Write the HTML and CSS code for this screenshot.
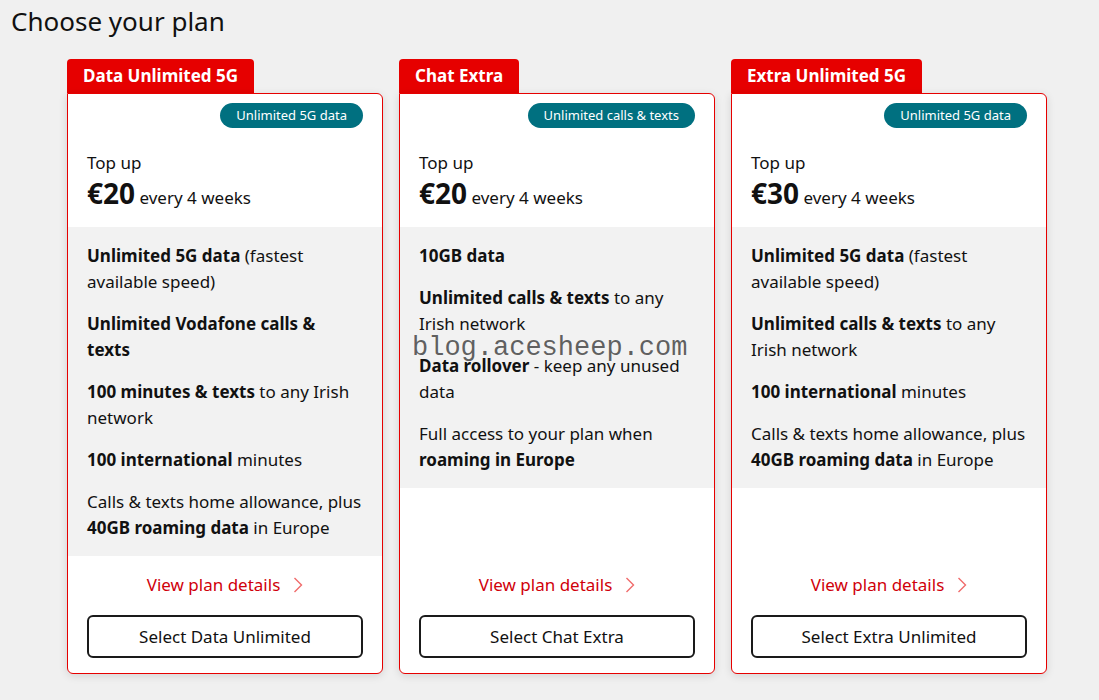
FILE: index.html
```html
<!DOCTYPE html>
<html lang="en">
<head>
<meta charset="utf-8">
<title>Choose your plan</title>
<link rel="stylesheet" href="styles.css">
</head>
<body>
<h1 class="page-title">Choose your plan</h1>
<div class="plans">
  <div class="plan">
    <div class="plan-tab">Data Unlimited 5G</div>
    <div class="plan-card">
      <div class="plan-head">
        <span class="badge">Unlimited 5G data</span>
        <div class="topup">Top up</div>
        <div class="price"><strong>€20</strong> every 4 weeks</div>
      </div>
      <div class="plan-features">
        <p><b>Unlimited 5G data</b> (fastest available speed)</p>
        <p><b>Unlimited Vodafone calls &amp;<br>texts</b></p>
        <p><b>100 minutes &amp; texts</b> to any Irish network</p>
        <p><b>100 international</b> minutes</p>
        <p>Calls &amp; texts home allowance, plus <b>40GB roaming data</b> in Europe</p>
      </div>
      <div class="plan-foot">
        <a class="details" href="#">View plan details <svg class="chev" width="10" height="16" viewBox="0 0 10 16"><path d="M1.5 1 L8.5 8 L1.5 15" fill="none" stroke="currentColor" stroke-width="1.4"/></svg></a>
        <button class="select">Select Data Unlimited</button>
      </div>
    </div>
  </div>
  <div class="plan">
    <div class="plan-tab">Chat Extra</div>
    <div class="plan-card">
      <div class="plan-head">
        <span class="badge">Unlimited calls &amp; texts</span>
        <div class="topup">Top up</div>
        <div class="price"><strong>€20</strong> every 4 weeks</div>
      </div>
      <div class="plan-features">
        <p><b>10GB data</b></p>
        <p><b>Unlimited calls &amp; texts</b> to any Irish network</p>
        <p><b>Data rollover</b> - keep any unused data</p>
        <p>Full access to your plan when <b>roaming in Europe</b></p>
      </div>
      <div class="plan-foot">
        <a class="details" href="#">View plan details <svg class="chev" width="10" height="16" viewBox="0 0 10 16"><path d="M1.5 1 L8.5 8 L1.5 15" fill="none" stroke="currentColor" stroke-width="1.4"/></svg></a>
        <button class="select">Select Chat Extra</button>
      </div>
    </div>
  </div>
  <div class="plan">
    <div class="plan-tab">Extra Unlimited 5G</div>
    <div class="plan-card">
      <div class="plan-head">
        <span class="badge">Unlimited 5G data</span>
        <div class="topup">Top up</div>
        <div class="price"><strong>€30</strong> every 4 weeks</div>
      </div>
      <div class="plan-features">
        <p><b>Unlimited 5G data</b> (fastest available speed)</p>
        <p><b>Unlimited calls &amp; texts</b> to any Irish network</p>
        <p><b>100 international</b> minutes</p>
        <p>Calls &amp; texts home allowance, plus <b>40GB roaming data</b> in Europe</p>
      </div>
      <div class="plan-foot">
        <a class="details" href="#">View plan details <svg class="chev" width="10" height="16" viewBox="0 0 10 16"><path d="M1.5 1 L8.5 8 L1.5 15" fill="none" stroke="currentColor" stroke-width="1.4"/></svg></a>
        <button class="select">Select Extra Unlimited</button>
      </div>
    </div>
  </div>
</div>
<div class="watermark">blog.acesheep.com</div>
</body>
</html>
```

FILE: styles.css
```css
html, body {
  margin: 0;
  padding: 0;
}
body {
  background: #f0f0f0;
  font-family: "Noto Sans", "Open Sans", sans-serif;
  color: #111;
  width: 1099px;
  height: 700px;
  overflow: hidden;
  position: relative;
}
.page-title {
  margin: 0;
  padding: 3px 0 0 11px;
  font-size: 26px;
  font-weight: 400;
  line-height: 36px;
  color: #111;
}
.plans {
  display: flex;
  gap: 16px;
  padding: 20px 0 0 67px;
  align-items: stretch;
}
.plan {
  width: 316px;
  display: flex;
  flex-direction: column;
}
.plan-tab {
  align-self: flex-start;
  background: #e60000;
  color: #fff;
  font-weight: 700;
  font-size: 17px;
  line-height: 34px;
  height: 34px;
  padding: 0 16px;
  border-radius: 4px 4px 0 0;
}
.plan-card {
  flex: 1;
  display: flex;
  flex-direction: column;
  background: #fff;
  border: 1px solid #e60000;
  border-radius: 0 6px 6px 6px;
  box-shadow: 0 2px 8px rgba(0,0,0,0.12);
  overflow: hidden;
}
.plan-head {
  padding: 9px 19px 0 19px;
  height: 124px;
  display: flex;
  flex-direction: column;
}
.badge {
  align-self: flex-end;
  background: #007080;
  color: #fff;
  font-size: 13px;
  line-height: 25px;
  height: 25px;
  padding: 0 16px;
  border-radius: 13px;
}
.topup {
  margin-top: 22px;
  font-size: 17px;
  line-height: 26px;
}
.price {
  font-size: 17px;
  line-height: 34px;
}
.price strong {
  font-size: 28px;
  font-weight: 700;
}
.plan-features {
  background: #f2f2f2;
  padding: 16px 19px 15px 19px;
  font-size: 17px;
  line-height: 26px;
}
.plan-features p {
  margin: 0 0 16px 0;
}
.plan-features p:last-child {
  margin-bottom: 0;
}
.plan-foot {
  margin-top: auto;
  padding: 16px 19px 15px 19px;
  display: flex;
  flex-direction: column;
  align-items: center;
}
.details {
  color: #d0000a;
  text-decoration: none;
  font-size: 17px;
  line-height: 26px;
  display: flex;
  align-items: center;
  gap: 13px;
}
.chev {
  color: #f06b6b;
}
.select {
  margin-top: 17px;
  width: 100%;
  height: 43px;
  background: #fff;
  border: 2px solid #1a1a1a;
  border-radius: 6px;
  font-family: inherit;
  font-size: 17px;
  color: #111;
}
.watermark {
  position: absolute;
  left: 412px;
  top: 332px;
  font-family: "Liberation Mono", monospace;
  font-size: 27px;
  line-height: 32px;
  color: rgba(70,70,70,0.85);
  pointer-events: none;
}
```
